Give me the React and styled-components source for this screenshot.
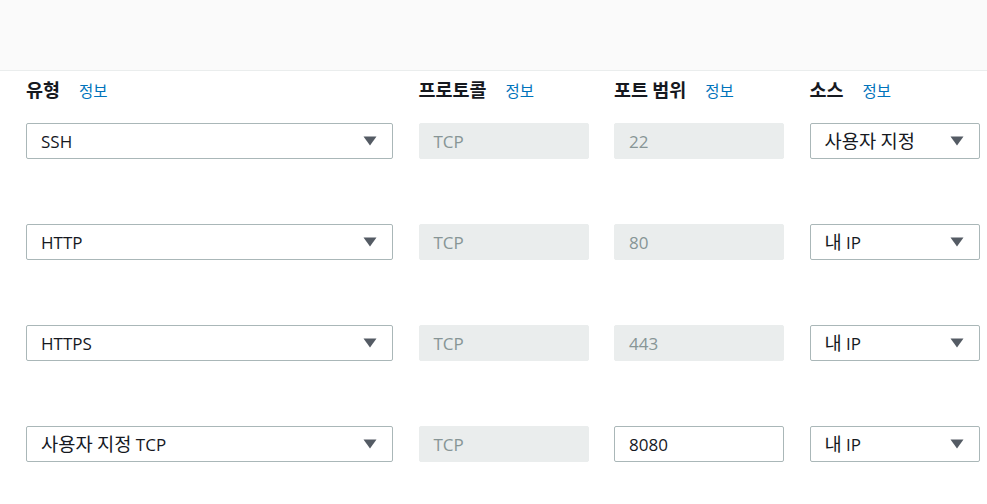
import React from "react";
import styled, { createGlobalStyle } from "styled-components";

const Global = createGlobalStyle`
  html, body { margin: 0; padding: 0; background: #ffffff; }
  body {
    font-family: "Open Sans", "Noto Sans CJK KR", sans-serif;
    color: #16191f;
    width: 987px;
    height: 504px;
    overflow: hidden;
  }
`;

const Page = styled.div`
  width: 987px;
  height: 504px;
  overflow: hidden;
  background: #ffffff;
`;

const TopBand = styled.div`
  height: 70px;
  background: #fafafa;
  border-bottom: 1px solid #eaeded;
`;

const Grid = styled.div`
  display: grid;
  grid-template-columns: 367px 170px 170px 170px;
  column-gap: 25.5px;
  padding: 5px 0 0 26px;
`;

const HeaderCell = styled.div`
  display: flex;
  align-items: baseline;
  gap: 19px;
  height: 26px;
  margin-bottom: 21px;
`;

const Label = styled.span`
  font-family: "Noto Sans CJK KR", "Open Sans", sans-serif;
  font-size: 18.5px;
  font-weight: 700;
  color: #16191f;
  line-height: 26px;
`;

const Info = styled.a`
  font-family: "Noto Sans CJK KR", "Open Sans", sans-serif;
  font-size: 15.5px;
  font-weight: 400;
  color: #0073bb;
  text-decoration: none;
  line-height: 26px;
`;

const Cell = styled.div`
  height: 101px;
`;

const Field = styled.div`
  box-sizing: border-box;
  height: 36px;
  display: flex;
  align-items: center;
  justify-content: space-between;
  padding: 0 15px 0 14px;
  border-radius: 2px;
  font-size: 17px;
  font-family: "Open Sans", "Noto Sans CJK KR", sans-serif;
  border: 1px solid ${(p) => (p.$disabled ? "#eaeded" : "#aab7b8")};
  background: ${(p) => (p.$disabled ? "#eaeded" : "#ffffff")};
  color: ${(p) => (p.$disabled ? "#879596" : "#16191f")};
`;

const Value = styled.span`
  white-space: pre;
`;

const Hangul = styled.span`
  font-family: "Noto Sans CJK KR", sans-serif;
  font-size: 1.1em;
  font-weight: 400;
  line-height: 1;
`;

const renderText = (text) =>
  text.split(/([\uAC00-\uD7A3]+)/).map((part, i) =>
    /[\uAC00-\uD7A3]/.test(part) ? <Hangul key={i}>{part}</Hangul> : part
  );

const Caret = () => (
  <svg width="14" height="10" viewBox="0 0 14 10" aria-hidden="true">
    <path d="M0.5 0.5 H13.5 L7 9.5 Z" fill="#545b64" />
  </svg>
);

const Select = ({ value }) => (
  <Field>
    <Value>{renderText(value)}</Value>
    <Caret />
  </Field>
);

const Input = ({ value, disabled }) => (
  <Field $disabled={disabled}>
    <Value>{value}</Value>
  </Field>
);

const headers = ["유형", "프로토콜", "포트 범위", "소스"];

const rows = [
  { type: "SSH", port: "22", portDisabled: true, source: "사용자 지정" },
  { type: "HTTP", port: "80", portDisabled: true, source: "내 IP" },
  { type: "HTTPS", port: "443", portDisabled: true, source: "내 IP" },
  { type: "사용자 지정 TCP", port: "8080", portDisabled: false, source: "내 IP" },
];

export default function App() {
  return (
    <Page>
      <Global />
      <TopBand />
      <Grid>
        {headers.map((h) => (
          <HeaderCell key={h}>
            <Label>{h}</Label>
            <Info href="#">정보</Info>
          </HeaderCell>
        ))}
        {rows.map((r, i) => (
          <React.Fragment key={i}>
            <Cell>
              <Select value={r.type} />
            </Cell>
            <Cell>
              <Input value="TCP" disabled />
            </Cell>
            <Cell>
              <Input value={r.port} disabled={r.portDisabled} />
            </Cell>
            <Cell>
              <Select value={r.source} />
            </Cell>
          </React.Fragment>
        ))}
      </Grid>
    </Page>
  );
}
